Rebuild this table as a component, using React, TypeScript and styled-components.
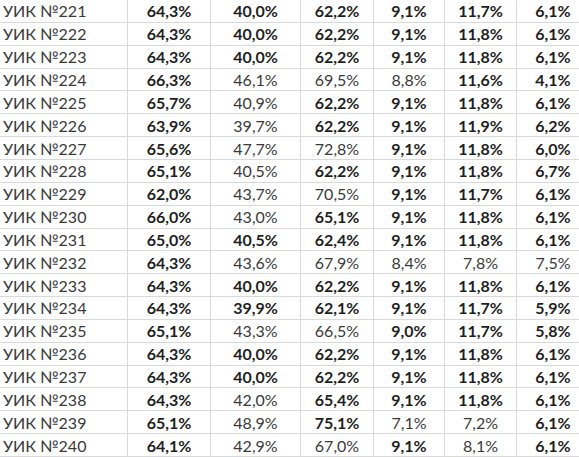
import React from "react";
import styled, { createGlobalStyle } from "styled-components";

const Global = createGlobalStyle`
  html, body { margin: 0; padding: 0; background: #ffffff; overflow: hidden; }
  body { width: 579px; height: 457px; }
`;

const Sheet = styled.div`
  width: 579px;
  height: 457px;
  overflow: hidden;
  display: grid;
  grid-template-rows: repeat(20, 1fr);
  background: #ffffff;
  font-family: Lato, "Open Sans", sans-serif;
  font-size: 16px;
  color: #262626;
`;

const Row = styled.div`
  display: grid;
  grid-template-columns: 128px 83px 90px 73px 71px 72px 72px;
  border-bottom: 1px solid #d9d9d9;
  box-sizing: border-box;
  min-width: 0;
  overflow: hidden;
`;

const Cell = styled.div<{ $bold?: boolean; $label?: boolean }>`
  box-sizing: border-box;
  border-right: 1px solid #d9d9d9;
  display: flex;
  align-items: center;
  justify-content: ${(p) => (p.$label ? "flex-start" : "center")};
  padding-left: ${(p) => (p.$label ? "3px" : "0")};
  font-weight: ${(p) => (p.$bold ? 700 : 400)};
  color: ${(p) => (p.$bold ? "#1f1f1f" : "#3a3a3a")};
  white-space: nowrap;
  overflow: hidden;

  &:last-child {
    border-right: none;
  }
`;

type V = [string, boolean];
const b = (s: string): V => [s, true];
const n = (s: string): V => [s, false];

const rows: [string, V[]][] = [
  ["221", [b("64,3"), b("40,0"), b("62,2"), b("9,1"), b("11,7"), b("6,1")]],
  ["222", [b("64,3"), b("40,0"), b("62,2"), b("9,1"), b("11,8"), b("6,1")]],
  ["223", [b("64,3"), b("40,0"), b("62,2"), b("9,1"), b("11,8"), b("6,1")]],
  ["224", [b("66,3"), n("46,1"), n("69,5"), n("8,8"), b("11,6"), b("4,1")]],
  ["225", [b("65,7"), n("40,9"), b("62,2"), b("9,1"), b("11,8"), b("6,1")]],
  ["226", [b("63,9"), n("39,7"), b("62,2"), b("9,1"), b("11,9"), b("6,2")]],
  ["227", [b("65,6"), n("47,7"), n("72,8"), b("9,1"), b("11,8"), b("6,0")]],
  ["228", [b("65,1"), n("40,5"), b("62,2"), b("9,1"), b("11,8"), b("6,7")]],
  ["229", [b("62,0"), n("43,7"), n("70,5"), b("9,1"), b("11,7"), b("6,1")]],
  ["230", [b("66,0"), n("43,0"), b("65,1"), b("9,1"), b("11,8"), b("6,1")]],
  ["231", [b("65,0"), b("40,5"), b("62,4"), b("9,1"), b("11,8"), b("6,1")]],
  ["232", [b("64,3"), n("43,6"), n("67,9"), n("8,4"), n("7,8"), n("7,5")]],
  ["233", [b("64,3"), b("40,0"), b("62,2"), b("9,1"), b("11,8"), b("6,1")]],
  ["234", [b("64,3"), b("39,9"), b("62,1"), b("9,1"), b("11,7"), b("5,9")]],
  ["235", [b("65,1"), n("43,3"), n("66,5"), b("9,0"), b("11,7"), b("5,8")]],
  ["236", [b("64,3"), b("40,0"), b("62,2"), b("9,1"), b("11,8"), b("6,1")]],
  ["237", [b("64,3"), b("40,0"), b("62,2"), b("9,1"), b("11,8"), b("6,1")]],
  ["238", [b("64,3"), n("42,0"), b("65,4"), b("9,1"), b("11,8"), b("6,1")]],
  ["239", [b("65,1"), n("48,9"), b("75,1"), n("7,1"), n("7,2"), b("6,1")]],
  ["240", [b("64,1"), n("42,9"), n("67,0"), b("9,1"), n("8,1"), b("6,1")]],
];

export default function App() {
  return (
    <>
      <Global />
      <Sheet>
        {rows.map(([id, vals]) => (
          <Row key={id}>
            <Cell $label>УИК №{id}</Cell>
            {vals.map(([v, bold], i) => (
              <Cell key={i} $bold={bold}>
                {v}%
              </Cell>
            ))}
          </Row>
        ))}
      </Sheet>
    </>
  );
}
